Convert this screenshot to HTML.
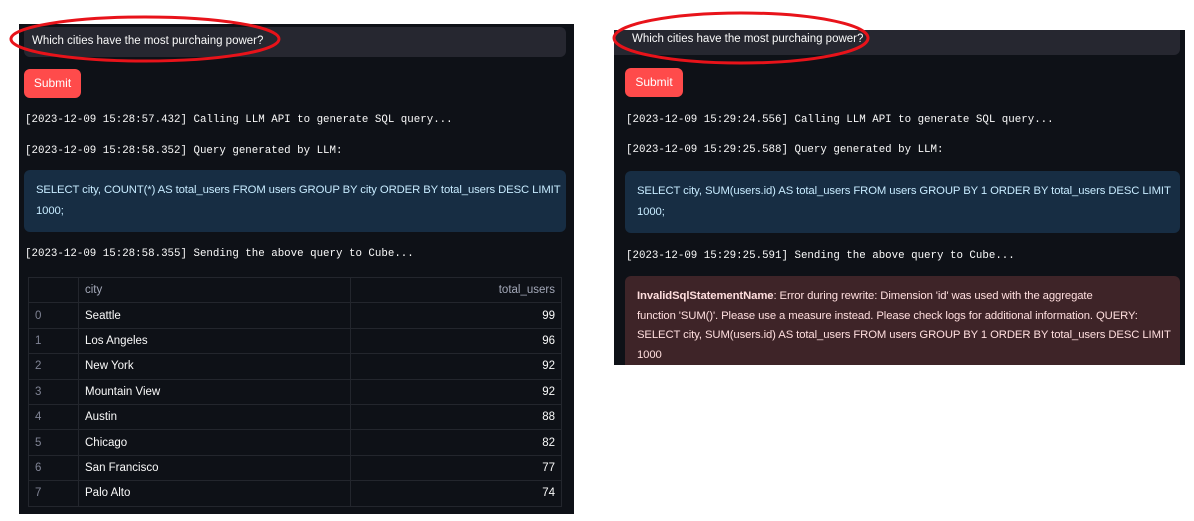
<!DOCTYPE html><html><head><style>
body{margin:0;width:1194px;height:521px;background:#fff;position:relative;overflow:hidden;font-family:"Liberation Sans",sans-serif}
.p{position:absolute;background:#0e1117}
.a{position:absolute}
.in{background:#262730;border-radius:6px;color:#fafafa;font-size:11.5px;line-height:29px;padding-left:8px;box-sizing:border-box}
.btn{background:#ff4b4b;border-radius:6px;color:#fff;font-size:12px;text-align:center;line-height:29px}
.m{font-family:"Liberation Mono",monospace;font-size:10.8px;color:#fafafa;white-space:pre}
.sql{background:#172d43;border-radius:6px;color:#c7ebff;font-size:11.3px;letter-spacing:-0.1px;line-height:21px;padding:10px 12px;box-sizing:border-box;white-space:nowrap}
.err{background:#3e2428;border-radius:6px 6px 0 0;color:#ffdede;font-size:11.3px;letter-spacing:-0.1px;line-height:19.5px;padding:11px 12px;box-sizing:border-box;white-space:nowrap}
table{border-collapse:collapse;font-size:11.5px;color:#fafafa}
td{border:1px solid #23262d;height:24.4px;padding:0 6px}
td.i{color:#808495;width:37px}
td.n{text-align:right}
</style></head><body>
<div class="p" style="left:19px;top:24px;width:555px;height:490px"></div>
<div class="a in" style="left:24px;top:27px;width:542px;height:30px">Which cities have the most purchaing power?</div>
<div class="a btn" style="left:24px;top:69px;width:57px;height:29px">Submit</div>
<div class="a m" style="left:25px;top:114px">[2023-12-09 15:28:57.432] Calling LLM API to generate SQL query...</div>
<div class="a m" style="left:25px;top:145px">[2023-12-09 15:28:58.352] Query generated by LLM:</div>
<div class="a sql" style="left:24px;top:170px;width:542px;height:62px">SELECT city, COUNT(*) AS total_users FROM users GROUP BY city ORDER BY total_users DESC LIMIT<br>1000;</div>
<div class="a m" style="left:25px;top:248px">[2023-12-09 15:28:58.355] Sending the above query to Cube...</div>
<table class="a" style="left:28px;top:277px;width:534px">
<tr><td class="i"></td><td style="color:#a3a8b8;width:259px">city</td><td class="n" style="color:#a3a8b8">total_users</td></tr>
<tr><td class="i">0</td><td>Seattle</td><td class="n">99</td></tr>
<tr><td class="i">1</td><td>Los Angeles</td><td class="n">96</td></tr>
<tr><td class="i">2</td><td>New York</td><td class="n">92</td></tr>
<tr><td class="i">3</td><td>Mountain View</td><td class="n">92</td></tr>
<tr><td class="i">4</td><td>Austin</td><td class="n">88</td></tr>
<tr><td class="i">5</td><td>Chicago</td><td class="n">82</td></tr>
<tr><td class="i">6</td><td>San Francisco</td><td class="n">77</td></tr>
<tr><td class="i">7</td><td>Palo Alto</td><td class="n">74</td></tr>
</table>

<div class="p" style="left:614px;top:30px;width:571px;height:335px"></div>
<div class="a in" style="left:614px;top:30px;width:566px;height:25px;line-height:18px;border-radius:0 0 6px 0;padding-left:18px">Which cities have the most purchaing power?</div>
<div class="a btn" style="left:625px;top:68px;width:58px;height:29px">Submit</div>
<div class="a m" style="left:626px;top:114px">[2023-12-09 15:29:24.556] Calling LLM API to generate SQL query...</div>
<div class="a m" style="left:626px;top:144px">[2023-12-09 15:29:25.588] Query generated by LLM:</div>
<div class="a sql" style="left:625px;top:171px;width:555px;height:62px">SELECT city, SUM(users.id) AS total_users FROM users GROUP BY 1 ORDER BY total_users DESC LIMIT<br>1000;</div>
<div class="a m" style="left:626px;top:250px">[2023-12-09 15:29:25.591] Sending the above query to Cube...</div>
<div class="a err" style="left:625px;top:276px;width:555px;height:89px;overflow:hidden"><b>InvalidSqlStatementName</b>: Error during rewrite: Dimension 'id' was used with the aggregate<br>function 'SUM()'. Please use a measure instead. Please check logs for additional information. QUERY:<br>SELECT city, SUM(users.id) AS total_users FROM users GROUP BY 1 ORDER BY total_users DESC LIMIT<br>1000</div>

<svg class="a" style="left:0;top:0" width="1194" height="521">
<ellipse cx="145" cy="39" rx="134" ry="22" fill="none" stroke="#e8131a" stroke-width="3"/>
<ellipse cx="741" cy="38" rx="127" ry="25" fill="none" stroke="#e8131a" stroke-width="3"/>
</svg>
</body></html>
